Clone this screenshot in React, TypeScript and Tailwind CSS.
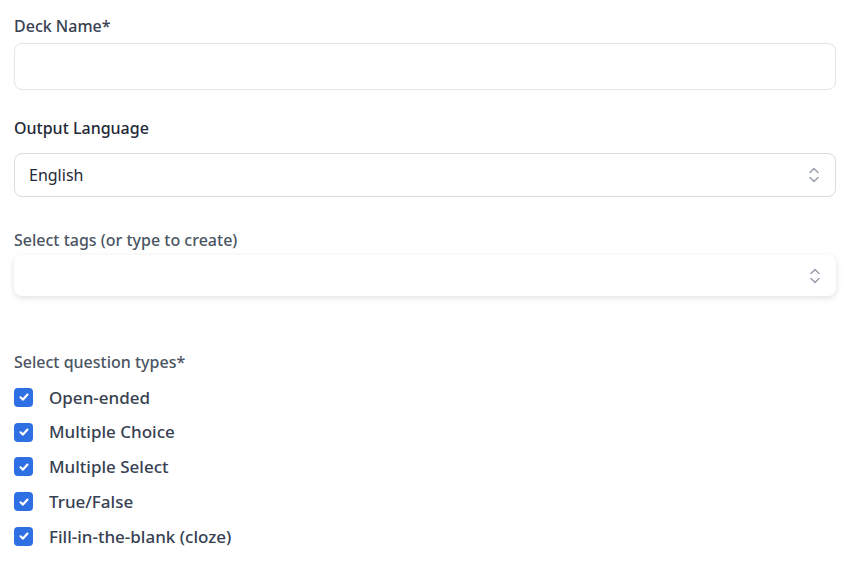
import React from "react";

const TYPES = [
  "Open-ended",
  "Multiple Choice",
  "Multiple Select",
  "True/False",
  "Fill-in-the-blank (cloze)",
];

function UpDown() {
  return (
    <svg width="14" height="20" viewBox="0 0 14 20" fill="none" stroke="#9ca3af" strokeWidth="1.6" strokeLinecap="round" strokeLinejoin="round">
      <path d="M3 7.5 L7 3.5 L11 7.5" />
      <path d="M3 12.5 L7 16.5 L11 12.5" />
    </svg>
  );
}

function Check() {
  return (
    <span className="flex h-[19px] w-[19px] items-center justify-center rounded-[4px] bg-[#2f6fe4]">
      <svg width="12" height="12" viewBox="0 0 12 12" fill="none" stroke="white" strokeWidth="2.2" strokeLinecap="round" strokeLinejoin="round">
        <path d="M2.5 6.3 L5 8.6 L9.5 3.6" />
      </svg>
    </span>
  );
}

export default function App() {
  return (
    <div className="min-h-screen bg-white px-[14px] pt-[15px] text-[#374151]" style={{ fontFamily: '"Noto Sans", "Open Sans", sans-serif' }}>
      <label className="block text-[16px] font-medium leading-[22px]">Deck Name*</label>
      <div className="mt-[6px] h-[47px] w-[822px] rounded-lg border border-[#e2e4ea] bg-white" />

      <label className="mt-[27px] block text-[16px] font-medium leading-[22px] text-[#1f2937]">Output Language</label>
      <div className="mt-[14px] flex h-[44px] w-[822px] items-center justify-between rounded-lg border border-[#d9dce3] bg-white pl-[14px] pr-[14px]">
        <span className="text-[16px] text-[#1f2937]">English</span>
        <UpDown />
      </div>

      <label className="mt-[32px] block text-[16px] font-medium leading-[22px] text-[#4b5563]">Select tags (or type to create)</label>
      <div className="mt-[4px] flex h-[41px] w-[822px] items-center justify-end rounded-lg bg-white pr-[14px] shadow-[0_2px_6px_rgba(0,0,0,0.12)]">
        <UpDown />
      </div>

      <label className="mt-[55px] block text-[16px] font-medium leading-[22px] text-[#4b5563]">Select question types*</label>
      <div className="mt-[7px] flex flex-col">
        {TYPES.map((t) => (
          <div key={t} className="flex h-[34.75px] items-center gap-[16px]">
            <Check />
            <span className="text-[17px] font-medium text-[#374151]">{t}</span>
          </div>
        ))}
      </div>
    </div>
  );
}
